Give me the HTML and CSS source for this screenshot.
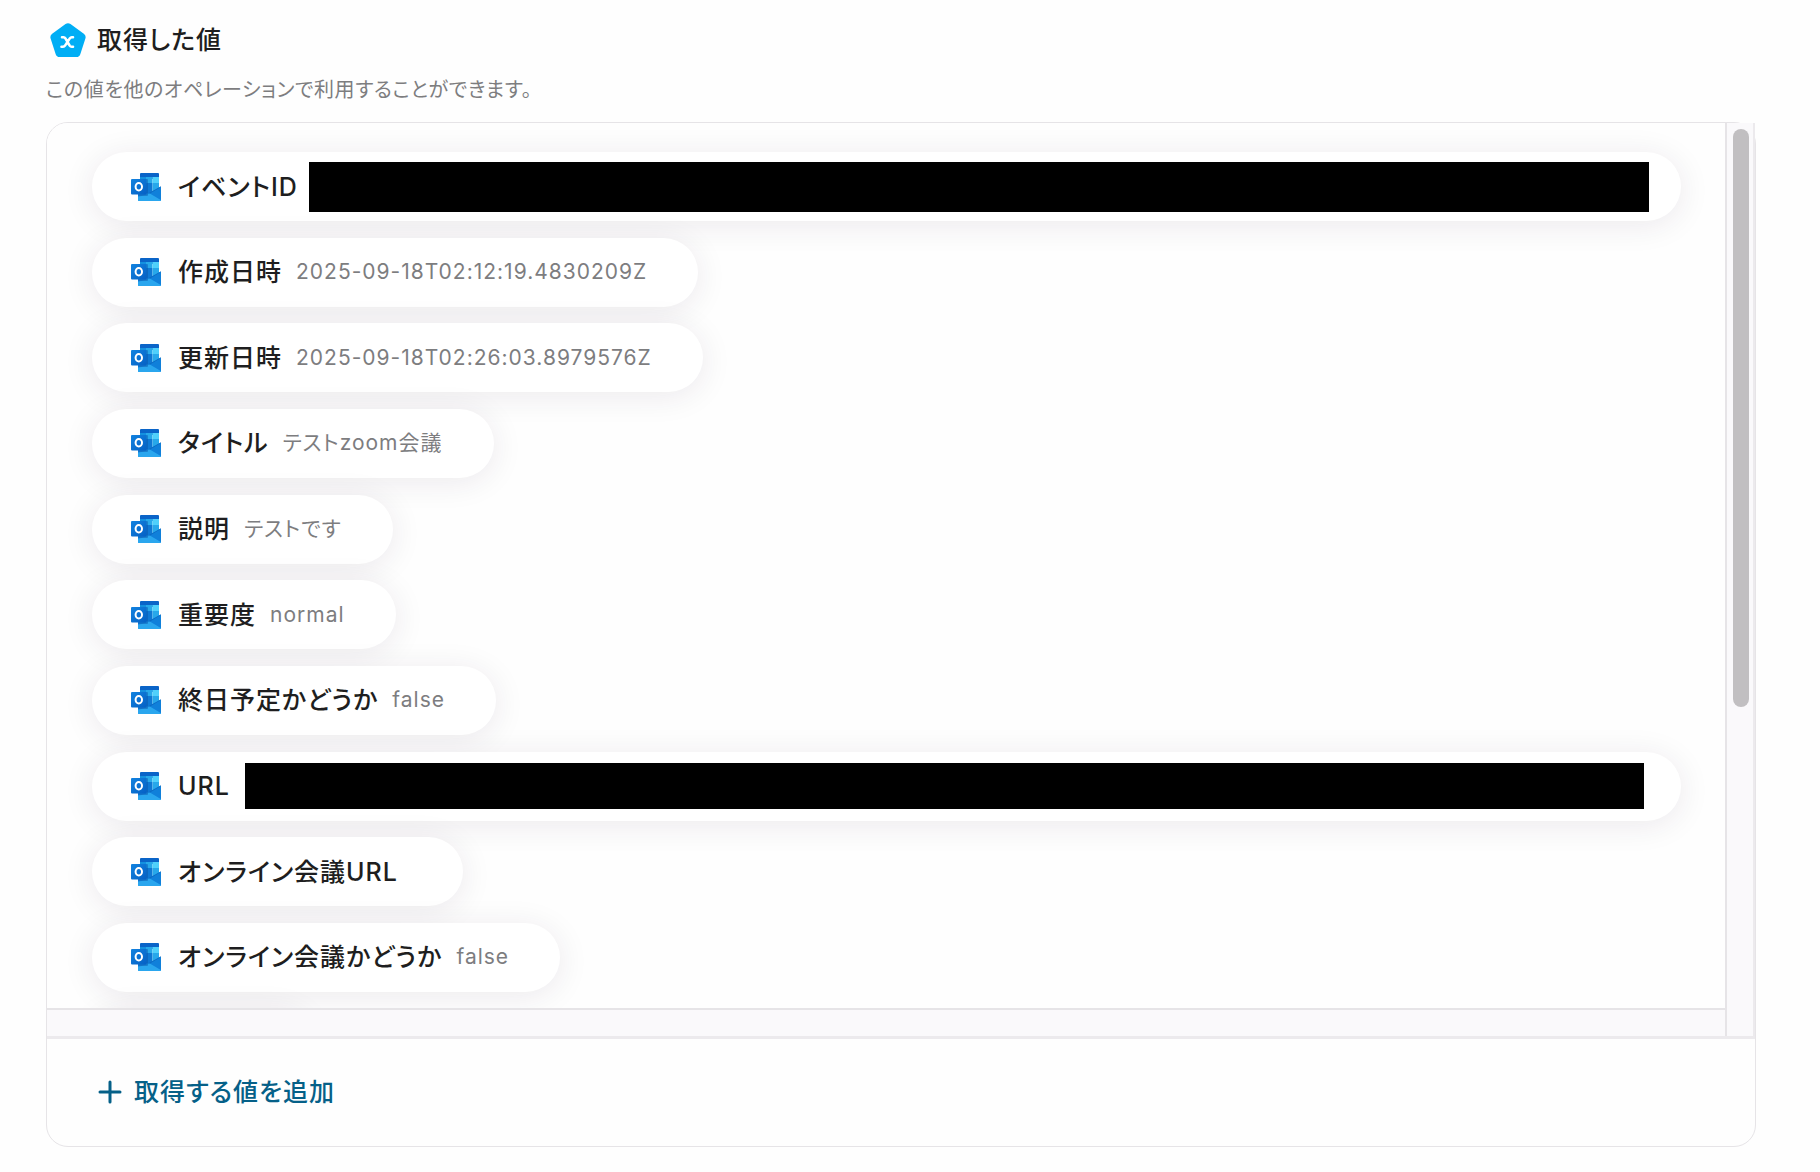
FILE: index.html
```html
<!DOCTYPE html>
<html lang="ja">
<head>
    <meta charset="UTF-8">
    <meta name="viewport" content="width=device-width, initial-scale=1.0">
    <title>取得した値</title>
    <link rel="stylesheet" href="styles.css">
</head>
<body>
    <!-- Shared service icon -->
    <svg class="sprite" aria-hidden="true">
        <defs>
            <linearGradient id="tile" x1="0" y1="0" x2="1" y2="1">
                <stop offset="0" stop-color="#1283e0"/>
                <stop offset="1" stop-color="#0560c4"/>
            </linearGradient>
        </defs>
        <symbol id="outlook" viewBox="0 0 30 28">
            <path fill="#0a64c8" d="M9 1q0-1 1-1h17q1 0 1 1v5H9z"/>
            <path fill="#1490df" d="M9 4h6.500v7H9z"/>
            <path fill="#28a8ea" d="M15 4h6.500v6H15z"/>
            <path fill="#50d0fb" d="M21.500 4H28v6h-6.500z"/>
            <path fill="#0f78d4" d="M9 10h12.500v12H9z"/>
            <path fill="#28a8ea" d="M21.500 10H28v10h-6.500z"/>
            <path fill="#1a8fe6" d="M7 20h12L30 14v13q0 1-1 1H8q-1 0-1-1z"/>
            <path fill="#0c6ac4" d="M17 20.500 30 13.200v1.200L19.500 21z"/>
            <path fill="#2aa6ee" d="M7 24l12-3.500L30 27q0 1-1 1H8q-1 0-1-1z"/>
            <path fill="#1080da" d="m30 14-11 6.500L30 27z"/>
            <path fill="#0752a6" opacity=".45" d="M9 6h7q1 0 1 1v15q0 1-1 1H7V8z"/>
            <rect fill="url(#tile)" y="6" width="15.500" height="15.500" rx="1"/>
            <ellipse cx="7.800" cy="13.800" rx="3.200" ry="3.700" fill="none" stroke="#fff" stroke-width="2"/>
        </symbol>
    </svg>

    <main class="page">
        <header class="header">
            <h1 class="title">
                <svg class="title-icon" viewBox="0 0 36 34" aria-hidden="true">
                    <path fill="#00aef5" d="M15.500 1q2.500-1.700 5 0l13.300 9.700q2.500 1.800 1.600 4.800l-5.100 15.700q-.9 2.800-3.800 2.800h-17q-2.900 0-3.800-2.800L.6 15.500q-.9-3 1.600-4.800z"/>
                    <path fill="none" stroke="#fff" stroke-width="2.600" stroke-linecap="round" stroke-linejoin="round" d="M12 14.200h1.500q1.200 0 1.900 1.200l4.300 7.200q.8 1.200 2 1.200H23M23 14.200h-1.200q-1.200 0-2 1.200l-4.600 7q-.9 1.400-2.200 1.400H11.500"/>
                </svg>
                取得した値
            </h1>
            <p class="lead">この値を他のオペレーションで利用することができます。</p>
        </header>

        <section class="panel">
            <div class="scroll">
                <ul class="list">
                    <li class="chip wide">
                        <svg class="icon"><use href="#outlook"/></svg>
                        <span class="name">イベントID</span>
                        <span class="mask"></span>
                    </li>
                    <li class="chip">
                        <svg class="icon"><use href="#outlook"/></svg>
                        <span class="name">作成日時</span>
                        <span class="value">2025-09-18T02:12:19.4830209Z</span>
                    </li>
                    <li class="chip">
                        <svg class="icon"><use href="#outlook"/></svg>
                        <span class="name">更新日時</span>
                        <span class="value">2025-09-18T02:26:03.8979576Z</span>
                    </li>
                    <li class="chip">
                        <svg class="icon"><use href="#outlook"/></svg>
                        <span class="name">タイトル</span>
                        <span class="value">テストzoom会議</span>
                    </li>
                    <li class="chip">
                        <svg class="icon"><use href="#outlook"/></svg>
                        <span class="name">説明</span>
                        <span class="value">テストです</span>
                    </li>
                    <li class="chip">
                        <svg class="icon"><use href="#outlook"/></svg>
                        <span class="name">重要度</span>
                        <span class="value">normal</span>
                    </li>
                    <li class="chip">
                        <svg class="icon"><use href="#outlook"/></svg>
                        <span class="name">終日予定かどうか</span>
                        <span class="value">false</span>
                    </li>
                    <li class="chip wide">
                        <svg class="icon"><use href="#outlook"/></svg>
                        <span class="name">URL</span>
                        <span class="mask small"></span>
                    </li>
                    <li class="chip">
                        <svg class="icon"><use href="#outlook"/></svg>
                        <span class="name">オンライン会議URL</span>
                        <span class="value"></span>
                    </li>
                    <li class="chip">
                        <svg class="icon"><use href="#outlook"/></svg>
                        <span class="name">オンライン会議かどうか</span>
                        <span class="value">false</span>
                    </li>
                </ul>
                <div class="track">
                    <div class="thumb"></div>
                </div>
            </div>
            <div class="footer">
                <button class="add-button" type="button">
                    <svg class="plus" viewBox="0 0 24 24" aria-hidden="true">
                        <path fill="none" stroke="currentColor" stroke-width="3" stroke-linecap="round" d="M12 2v20M2 12h20"/>
                    </svg>
                    取得する値を追加
                </button>
            </div>
        </section>
    </main>
</body>
</html>
```

FILE: styles.css
```css
:root {
    --bg-color: #fefefe;
    --text-color: #1e1e20;
    --sub-color: #7d7d7f;
    --line-color: #e6e4e7;
    --track-color: #faf9fb;
    --accent-color: #056088;
}

* {
    box-sizing: border-box;
}

body {
    margin: 0;
    background-color: var(--bg-color);
    color: var(--text-color);
    font-family: Inter, "Noto Sans CJK JP", sans-serif;
    font-feature-settings: "palt";
    letter-spacing: 1px;
}

.sprite {
    position: absolute;
    width: 0;
    height: 0;
}

.page {
    padding: 22px 64px 24px 46px;
}

.title {
    display: flex;
    align-items: center;
    gap: 11px;
    margin: 0;
    padding-left: 4px;
    font-size: 25px;
    font-weight: 500;
    line-height: 36px;
}

.title-icon {
    width: 36px;
    height: 34px;
}

.lead {
    margin: 16px 0;
    color: var(--sub-color);
    font-size: 20px;
    line-height: 32px;
    letter-spacing: 0.03em;
}

.panel {
    border: 1px solid var(--line-color);
    border-radius: 22px;
}

.scroll {
    display: grid;
    grid-template-columns: minmax(0, 1fr) 30px;
    border-bottom: 3px solid #eceaed;
    background-color: var(--track-color);
    border-top-left-radius: 21px;
    padding-bottom: 26px;
}

.list {
    position: relative;
    display: flex;
    flex-direction: column;
    justify-content: space-between;
    align-items: flex-start;
    height: 887px;
    margin: 0;
    padding: 29px 44px 16px 45px;
    overflow: hidden;
    list-style: none;
    background-color: var(--bg-color);
    border-bottom: 2px solid var(--line-color);
    border-top-left-radius: 21px;
}

/* Top edge of the next row, hidden under the scroll area */
.list::after {
    content: "";
    position: absolute;
    top: 100%;
    left: 45px;
    width: 220px;
    height: 69px;
    border-radius: 35px;
    box-shadow: 0 4px 32px rgba(40, 20, 50, 0.09);
}

.chip {
    display: flex;
    align-items: center;
    height: 69px;
    padding: 0 51px 0 39px;
    border-radius: 35px;
    background-color: #ffffff;
    box-shadow: 0 4px 32px rgba(40, 20, 50, 0.09);
}

.chip.wide {
    width: 100%;
    padding-right: 32px;
}

.icon {
    width: 30px;
    height: 28px;
    margin-right: 17px;
}

.name {
    font-size: 25px;
    font-weight: 500;
    line-height: 36px;
    white-space: nowrap;
}

.value {
    margin-left: 14px;
    color: var(--sub-color);
    font-size: 21px;
    line-height: 36px;
    white-space: nowrap;
}

.mask {
    flex: 1;
    height: 50px;
    margin-left: 11px;
    background-color: #000000;
}

.mask.small {
    height: 46px;
    margin: 0 5px 0 15px;
}

.track {
    position: relative;
    height: 913px;
    margin-bottom: -26px;
    padding: 6px 0 0 6px;
    border-left: 2px solid var(--line-color);
    border-right: 2px solid #eceaed;
    background-color: var(--track-color);
}

.thumb {
    width: 16px;
    height: 578px;
    border-radius: 8px;
    background-color: #c1bfc1;
}

.footer {
    padding: 34px 51px 35px;
}

.add-button {
    display: flex;
    align-items: center;
    gap: 12px;
    padding: 0;
    border: none;
    background: none;
    color: var(--accent-color);
    font: inherit;
    font-size: 25px;
    font-weight: 500;
    line-height: 38px;
    letter-spacing: inherit;
    cursor: pointer;
}

.plus {
    width: 24px;
    height: 24px;
}
```
